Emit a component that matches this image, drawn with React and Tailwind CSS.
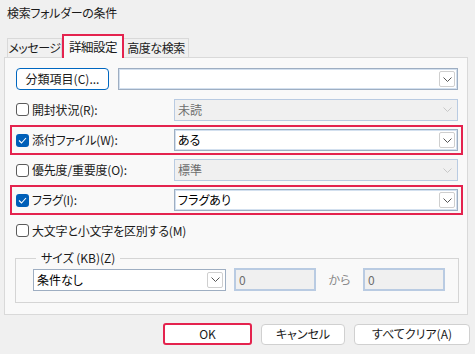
const FONT = "font-['Noto_Sans_CJK_JP','Noto_Sans',sans-serif] [font-feature-settings:'palt']"

function Chevron({ className = 'text-[#555]' }) {
  return (
    <svg width="9" height="5" viewBox="0 0 9 5" className={className}>
      <path d="M0.5 0.5 L4.5 4.5 L8.5 0.5" fill="none" stroke="currentColor" strokeWidth="1" />
    </svg>
  )
}

function Checkbox({ checked }) {
  return checked ? (
    <span className="flex h-[13px] w-[13px] shrink-0 items-center justify-center rounded-[3px] bg-[#005fb8]">
      <svg width="9" height="7" viewBox="0 0 9 7">
        <path d="M1 3.5 L3.5 6 L8 1" fill="none" stroke="#fff" strokeWidth="1.1" />
      </svg>
    </span>
  ) : (
    <span className="h-[13px] w-[13px] shrink-0 rounded-[3px] border border-[#5a5a5a] bg-white" />
  )
}

function Combo({ value, disabled, className = '' }) {
  return (
    <div
      className={`flex h-[22px] items-center border pl-[3px] pr-[2px] ${
        disabled
          ? 'border-[#b9cbe2] bg-[#f0f0f0] text-[#6d6d6d]'
          : 'border-[#9eaec2] bg-white text-black shadow-[inset_0_0_0_1px_#d3e0ef]'
      } ${className}`}
    >
      <span className="flex-1 overflow-hidden whitespace-nowrap leading-[18px]">{value}</span>
      {disabled ? (
        <span className="flex h-[16px] w-[16px] items-center justify-center">
          <Chevron className="text-[#c8c8c8]" />
        </span>
      ) : (
        <span className="flex h-[16px] w-[16px] items-center justify-center rounded-[2px] border border-[#cfcfcf] bg-white">
          <Chevron />
        </span>
      )}
    </div>
  )
}

function Row({ label, checked, value, disabled, marked, h = 'h-[30px]' }) {
  return (
    <div
      className={`ml-[5px] mr-[4px] flex ${h} items-center border-2 pl-[4px] pr-[3px] ${
        marked ? 'border-[#e4234e]' : 'border-transparent'
      }`}
    >
      <div className="flex flex-1 items-center gap-[3px]">
        <Checkbox checked={checked} />
        <span className="tracking-[-0.2px]">{label}</span>
      </div>
      <Combo value={value} disabled={disabled} className="w-[284px]" />
    </div>
  )
}

export default function App() {
  return (
    <div className={`flex h-[354px] w-[475px] flex-col bg-[#f0f0f0] text-[12px] text-[#1a1a1a] ${FONT}`}>
      <div className="flex h-[28px] items-center pl-[7px] pb-[2px] tracking-[-0.3px]">検索フォルダーの条件</div>

      <div className="mt-[6px] flex items-end pl-[7px] tracking-[-0.5px]">
        <div className="flex h-[19px] w-[55px] items-center justify-center border border-b-0 border-[#d9d9d9] bg-[#f0f0f0]">メッセージ</div>
        <div className="relative z-10 -mb-px flex h-[24px] w-[62px] items-center justify-center border-2 border-b-0 border-[#e4234e] bg-[#f9f9f9] text-[12.5px]">
          詳細設定
        </div>
        <div className="flex h-[19px] w-[65px] items-center justify-center border border-b-0 border-l-0 border-[#d9d9d9] bg-[#f0f0f0]">高度な検索</div>
      </div>

      <div className="ml-[4px] mr-[7px] flex h-[258px] flex-col border border-[#d9d9d9] bg-[#f9f9f9] pt-[6px]">
        <div className="ml-[5px] mr-[4px] flex h-[30px] items-center border-2 border-transparent pl-[4px] pr-[3px]">
          <button className="flex h-[22px] w-[93px] items-center justify-center rounded-[4px] border border-[#0067c0] bg-white">
            分類項目(C)...
          </button>
          <Combo value="" className="ml-[9px] flex-1" />
        </div>
        <Row label="開封状況(R):" value="未読" disabled h="h-[31px]" />
        <Row label="添付ファイル(W):" value="ある" checked marked />
        <Row label="優先度/重要度(O):" value="標準" disabled h="h-[30px]" />
        <Row label="フラグ(I):" value="フラグあり" checked marked />
        <div className="ml-[5px] flex h-[31px] items-center gap-[3px] border-2 border-transparent pl-[4px]">
          <Checkbox />
          <span className="tracking-[-0.2px]">大文字と小文字を区別する(M)</span>
        </div>

        <fieldset className="mt-[6px] ml-[10px] mr-[8px] h-[51px] border border-[#d5d5d5] pl-[17px] pr-[13px] pt-[4px]">
          <legend className="ml-[3px] px-[5px] leading-none">サイズ (KB)(Z)</legend>
          <div className="flex items-center">
            <Combo value="条件なし" className="w-[193px] border-[#8e8e8e] shadow-none" />
            <div className="ml-[8px] flex h-[23px] w-[82px] items-center border-2 border-[#b9cbe2] bg-[#f0f0f0] pl-[3px] text-[#6d6d6d]">0</div>
            <span className="w-[47px] text-center text-[#8a8a8a]">から</span>
            <div className="flex h-[23px] w-[82px] items-center border-2 border-[#b9cbe2] bg-[#f0f0f0] pl-[3px] text-[#6d6d6d]">0</div>
          </div>
        </fieldset>
      </div>

      <div className="mt-[8px] flex items-center justify-end gap-[9px] pr-[5px]">
        <button className="flex h-[22px] w-[89px] items-center justify-center rounded-[3px] border-2 border-[#e4234e] bg-white">OK</button>
        <button className="flex h-[21px] w-[84px] items-center justify-center rounded-[4px] border border-[#d0d0d0] bg-white">キャンセル</button>
        <button className="flex h-[21px] w-[116px] items-center justify-center rounded-[4px] border border-[#d0d0d0] bg-white">すべてクリア(A)</button>
      </div>
    </div>
  )
}
